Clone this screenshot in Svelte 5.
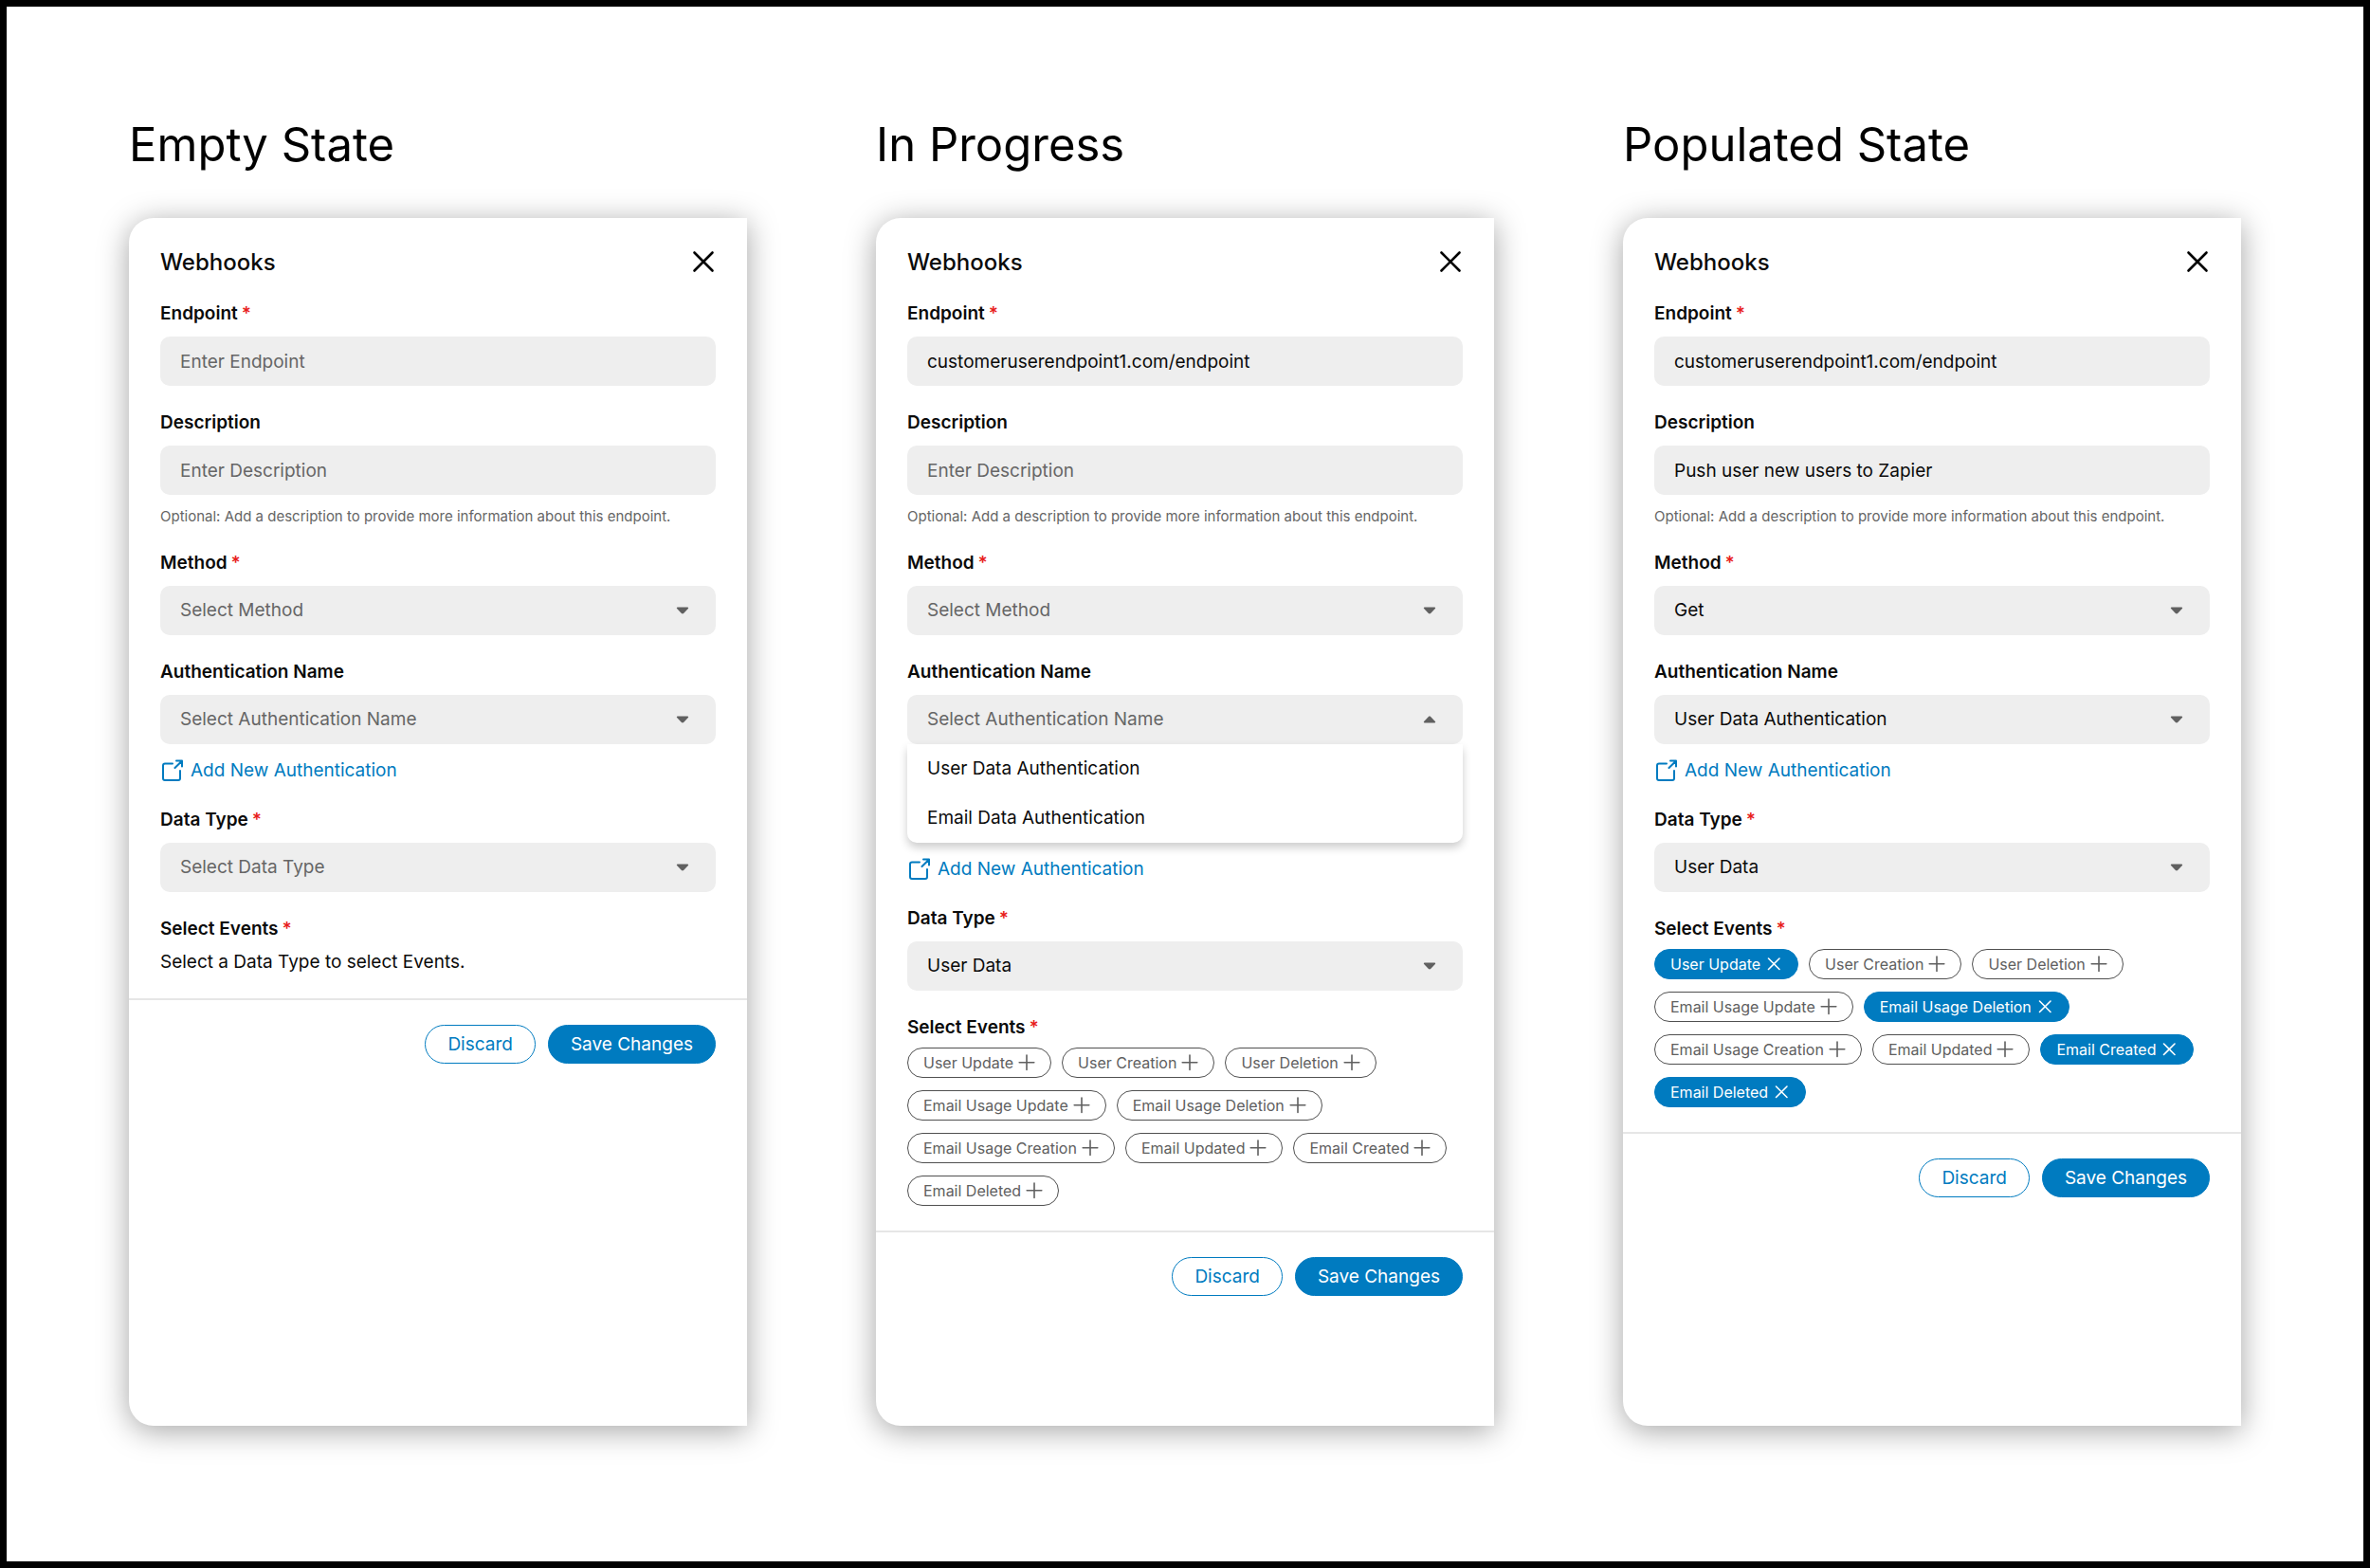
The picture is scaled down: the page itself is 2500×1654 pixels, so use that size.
<script lang="ts">
	interface AuthOption {
		id: string;
		label: string;
	}

	interface PanelState {
		id: string;
		title: string;
		endpoint: string;
		description: string;
		method: string;
		authName: string;
		authOpen: boolean;
		dataType: string;
		selected: string[];
	}

	const authOptions: AuthOption[] = [
		{ id: 'user', label: 'User Data Authentication' },
		{ id: 'email', label: 'Email Data Authentication' }
	];

	const events = [
		'User Update',
		'User Creation',
		'User Deletion',
		'Email Usage Update',
		'Email Usage Deletion',
		'Email Usage Creation',
		'Email Updated',
		'Email Created',
		'Email Deleted'
	];

	let panels = $state<PanelState[]>([
		{
			id: 'empty',
			title: 'Empty State',
			endpoint: '',
			description: '',
			method: '',
			authName: '',
			authOpen: false,
			dataType: '',
			selected: []
		},
		{
			id: 'progress',
			title: 'In Progress',
			endpoint: 'customeruserendpoint1.com/endpoint',
			description: '',
			method: '',
			authName: '',
			authOpen: true,
			dataType: 'User Data',
			selected: []
		},
		{
			id: 'populated',
			title: 'Populated State',
			endpoint: 'customeruserendpoint1.com/endpoint',
			description: 'Push user new users to Zapier',
			method: 'Get',
			authName: 'User Data Authentication',
			authOpen: false,
			dataType: 'User Data',
			selected: ['User Update', 'Email Usage Deletion', 'Email Created', 'Email Deleted']
		}
	]);

	function toggleEvent(panel: PanelState, event: string) {
		if (panel.selected.includes(event)) {
			panel.selected = panel.selected.filter((e) => e !== event);
		} else {
			panel.selected = [...panel.selected, event];
		}
	}

	function pickAuth(panel: PanelState, option: AuthOption) {
		panel.authName = option.label;
		panel.authOpen = false;
	}
</script>

{#snippet arrow(open: boolean)}
	<svg class="arrow" class:open viewBox="0 0 14 8" width="14" height="8" aria-hidden="true">
		<path
			d="M1.8 0.5h10.4c.9 0 1.3.9.7 1.5L8.1 7c-.6.6-1.6.6-2.2 0L1.1 2C.5 1.4.9.5 1.8.5z"
			fill="currentColor"
		/>
	</svg>
{/snippet}

<main class="board">
	{#each panels as panel (panel.id)}
		<section class="column">
			<h1>{panel.title}</h1>
			<form class="panel" onsubmit={(e) => e.preventDefault()}>
				<div class="panel-body">
					<header class="panel-header">
						<h2>Webhooks</h2>
						<button class="close-btn" type="button" aria-label="Close">
							<svg
								viewBox="0 0 24 24"
								width="24"
								height="24"
								fill="none"
								stroke="currentColor"
								stroke-width="2.6"
								stroke-linecap="round"
								aria-hidden="true"
							>
								<path d="M2.5 2.5l19 19M21.5 2.5l-19 19" />
							</svg>
						</button>
					</header>

					<div class="field">
						<label for="{panel.id}-endpoint">Endpoint<span class="required">*</span></label>
						<input
							id="{panel.id}-endpoint"
							class="control"
							type="text"
							placeholder="Enter Endpoint"
							bind:value={panel.endpoint}
						/>
					</div>

					<div class="field">
						<label for="{panel.id}-description">Description</label>
						<input
							id="{panel.id}-description"
							class="control"
							type="text"
							placeholder="Enter Description"
							bind:value={panel.description}
						/>
						<p class="helper">
							Optional: Add a description to provide more information about this endpoint.
						</p>
					</div>

					<div class="field">
						<label for="{panel.id}-method">Method<span class="required">*</span></label>
						<div class="select-wrap">
							<select
								id="{panel.id}-method"
								class="control"
								class:placeholder={!panel.method}
								bind:value={panel.method}
							>
								<option value="">Select Method</option>
								<option value="Get">Get</option>
								<option value="Post">Post</option>
							</select>
							{@render arrow(false)}
						</div>
					</div>

					<div class="field">
						<label for="{panel.id}-auth">Authentication Name</label>
						<div class="select-wrap">
							<select
								id="{panel.id}-auth"
								class="control"
								class:placeholder={!panel.authName}
								bind:value={panel.authName}
							>
								<option value="">Select Authentication Name</option>
								{#each authOptions as option (option.id)}
									<option value={option.label}>{option.label}</option>
								{/each}
							</select>
							{@render arrow(panel.authOpen)}
						</div>
						{#if panel.authOpen}
							<ul class="menu">
								{#each authOptions as option (option.id)}
									<li>
										<button type="button" onclick={() => pickAuth(panel, option)}>
											{option.label}
										</button>
									</li>
								{/each}
							</ul>
						{/if}
						<a class="add-link" href="#new-authentication">
							<svg
								viewBox="0 0 24 24"
								width="24"
								height="24"
								fill="none"
								stroke="currentColor"
								stroke-width="2"
								stroke-linecap="round"
								stroke-linejoin="round"
								aria-hidden="true"
							>
								<path d="M13 4.5H5A2 2 0 0 0 3 6.5V20A2 2 0 0 0 5 22H19A2 2 0 0 0 21 20V12" />
								<path d="M17 1.5H23V7.5M22.6 2L15.5 9" />
							</svg>
							Add New Authentication
						</a>
					</div>

					<div class="field">
						<label for="{panel.id}-data-type">Data Type<span class="required">*</span></label>
						<div class="select-wrap">
							<select
								id="{panel.id}-data-type"
								class="control"
								class:placeholder={!panel.dataType}
								bind:value={panel.dataType}
							>
								<option value="">Select Data Type</option>
								<option value="User Data">User Data</option>
								<option value="Email Data">Email Data</option>
							</select>
							{@render arrow(false)}
						</div>
					</div>

					<fieldset class="events">
						<legend>Select Events<span class="required">*</span></legend>
						{#if panel.dataType}
							<div class="chips">
								{#each events as event (event)}
									{@const active = panel.selected.includes(event)}
									<button
										class="chip"
										class:active
										type="button"
										aria-pressed={active}
										onclick={() => toggleEvent(panel, event)}
									>
										{event}
										<svg
											viewBox="0 0 18 18"
											width="18"
											height="18"
											fill="none"
											stroke="currentColor"
											stroke-width="1.6"
											stroke-linecap="round"
											aria-hidden="true"
										>
											{#if active}
												<path d="M3.5 3l11.5 11.5M15 3l-11.5 11.5" />
											{:else}
												<path d="M9 1v15.5M1.2 8.8h15.6" />
											{/if}
										</svg>
									</button>
								{/each}
							</div>
						{:else}
							<p class="events-hint">Select a Data Type to select Events.</p>
						{/if}
					</fieldset>
				</div>

				<footer class="panel-footer">
					<button class="btn btn-outline" type="button">Discard</button>
					<button class="btn btn-primary" type="submit">Save Changes</button>
				</footer>
			</form>
		</section>
	{/each}
</main>

<style>
	:global(body) {
		background: #fff;
	}

	.board {
		box-sizing: border-box;
		display: grid;
		grid-template-columns: repeat(3, minmax(0, 1fr));
		gap: 136px;
		min-height: 100vh;
		padding: 115px 129px 143px;
		border: 7px solid #000;
		font-family: Inter, 'Liberation Sans', sans-serif;
		font-size: 19px;
		line-height: 24px;
		color: #0b0b0b;
	}

	.column {
		display: flex;
		flex-direction: column;
		gap: 46px;
	}

	h1,
	h2,
	p,
	ul {
		margin: 0;
		padding: 0;
		font-weight: 400;
	}

	h1 {
		font-size: 49px;
		line-height: 62px;
		color: #000;
	}

	button,
	input,
	select {
		font: inherit;
		color: inherit;
	}

	.panel {
		flex: 1;
		background: #fff;
		border-radius: 26px 0 0 26px;
		box-shadow: 0 5px 32px rgba(0, 0, 0, 0.36);
	}

	.panel-body {
		display: flex;
		flex-direction: column;
		gap: 26px;
		padding: 32px 33px 26px;
		border-bottom: 2px solid #e6e6e6;
	}

	.panel-header {
		display: flex;
		align-items: flex-start;
		justify-content: space-between;
	}

	h2 {
		font-size: 24px;
		line-height: 30px;
		font-weight: 500;
	}

	.close-btn {
		display: flex;
		padding: 2px 1px;
		border: none;
		background: none;
		color: #000;
		cursor: pointer;
	}

	.field {
		display: flex;
		flex-direction: column;
	}

	label,
	legend {
		padding: 0;
		font-weight: 600;
		line-height: 26px;
	}

	label {
		margin-bottom: 11px;
	}

	.required {
		margin-left: 4px;
		color: #e81c1c;
	}

	.control {
		box-sizing: border-box;
		width: 100%;
		height: 52px;
		padding: 0 21px;
		border: none;
		border-radius: 10px;
		background: #eee;
		appearance: none;
	}

	.control::placeholder {
		color: #666;
		opacity: 1;
	}

	.control.placeholder {
		color: #666;
	}

	.select-wrap {
		display: grid;
		align-items: center;
	}

	.select-wrap > :global(*) {
		grid-area: 1 / 1;
	}

	.arrow {
		justify-self: end;
		margin-right: 28px;
		color: #606060;
		pointer-events: none;
	}

	.arrow.open {
		transform: rotate(180deg);
	}

	.helper {
		margin-top: 13px;
		font-size: 15px;
		line-height: 20px;
		color: #666;
	}

	.menu {
		list-style: none;
		border-radius: 0 0 10px 10px;
		box-shadow: 0 5px 10px rgba(0, 0, 0, 0.2);
		background: #fff;
	}

	.menu button {
		width: 100%;
		height: 52px;
		padding: 0 21px;
		border: none;
		background: none;
		text-align: left;
		cursor: pointer;
	}

	.add-link {
		display: flex;
		align-items: center;
		gap: 8px;
		align-self: flex-start;
		margin-top: 15px;
		line-height: 26px;
		color: #007bc0;
		text-decoration: none;
	}

	.events {
		min-width: 0;
		margin: 0;
		padding: 0;
		border: none;
	}

	.events-hint {
		padding-top: 10px;
	}

	.chips {
		display: flex;
		flex-wrap: wrap;
		gap: 13px 11px;
		padding-top: 8px;
	}

	.chip {
		box-sizing: border-box;
		display: flex;
		align-items: center;
		gap: 5px;
		height: 32px;
		padding: 0 16px;
		border: 1px solid #505050;
		border-radius: 16px;
		background: #fff;
		font-size: 16px;
		color: #606060;
		cursor: pointer;
	}

	.chip.active {
		border-color: #007bc0;
		background: #007bc0;
		color: #fff;
	}

	.panel-footer {
		display: flex;
		justify-content: flex-end;
		gap: 13px;
		padding: 26px 33px;
	}

	.btn {
		box-sizing: border-box;
		height: 41px;
		padding: 0 23px;
		border: 1px solid #007bc0;
		border-radius: 21px;
		cursor: pointer;
	}

	.btn-outline {
		background: #fff;
		color: #007bc0;
	}

	.btn-primary {
		background: #007bc0;
		color: #fff;
	}
</style>
